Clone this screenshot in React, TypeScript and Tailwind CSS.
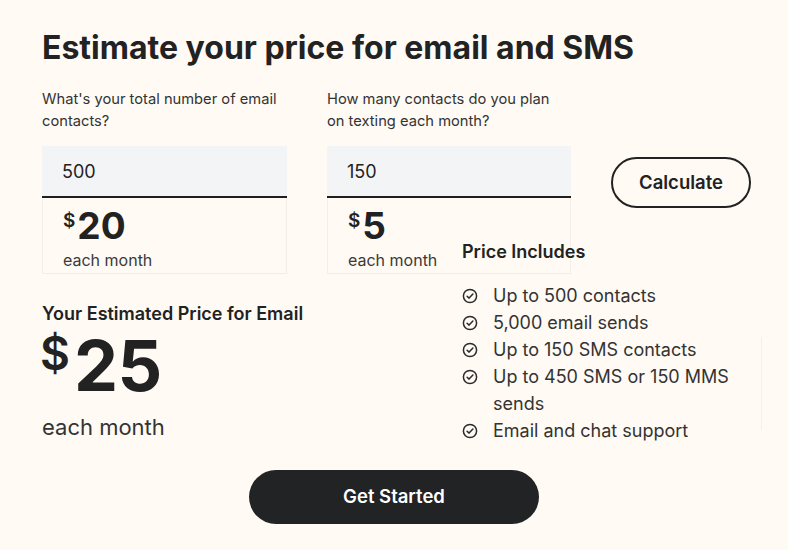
import React from "react";

const CheckIcon = () => (
  <svg width="16" height="16" viewBox="0 0 16 16" fill="none" className="shrink-0">
    <circle cx="8" cy="8" r="6.6" stroke="#2b2b2b" strokeWidth="1.5" />
    <path d="M5.1 8.2 L7.1 10.1 L10.9 6.1" stroke="#2b2b2b" strokeWidth="1.5" strokeLinecap="round" strokeLinejoin="round" />
  </svg>
);

const items = [
  "Up to 500 contacts",
  "5,000 email sends",
  "Up to 150 SMS contacts",
  "Up to 450 SMS or 150 MMS sends",
  "Email and chat support",
];

function InputCol({ label, value, price }: { label: string; value: string; price: string }) {
  return (
    <div className="flex flex-col">
      <div className="text-[14.7px] leading-[22px] text-[#333] h-[58px]">{label}</div>
      <div className="h-[52px] bg-[#f3f4f6] border-b-2 border-[#1f1f1f] flex items-center px-[20px] text-[18px] text-[#222]">
        {value}
      </div>
      <div className="h-[76px] border border-t-0 border-[#f3eee6] pl-[20px] pt-[8px]">
        <div className="flex items-start text-[#222]">
          <span className="text-[19px] font-semibold leading-none mt-[5px] mr-[2px]">$</span>
          <span className="text-[37px] font-bold leading-[40px]">{price}</span>
        </div>
        <div className="text-[16px] text-[#3a3a3a] leading-[20px] mt-[4px]">each month</div>
      </div>
    </div>
  );
}

export default function App() {
  return (
    <div
      className="w-[788px] h-[550px] bg-[#fffaf3] text-[#222] pl-[42px] pr-[37px] pt-[28px] overflow-hidden"
      style={{ fontFamily: "Inter, 'Noto Sans', sans-serif" }}
    >
      <h1 className="text-[32px] font-bold leading-[40px] text-[#222]">
        Estimate your price for email and SMS
      </h1>
      <div className="grid grid-cols-[245px_244px_140px] gap-x-[40px] mt-[20px]">
        <InputCol label="What's your total number of email contacts?" value="500" price="20" />
        <InputCol label="How many contacts do you plan on texting each month?" value="150" price="5" />
        <div className="pt-[69px]">
          <button className="w-[140px] h-[51px] rounded-full border-2 border-[#222] text-[18.5px] font-semibold text-[#222]">
            Calculate
          </button>
        </div>
      </div>
      <div className="grid grid-cols-[420px_300px] items-end -mt-[34px]">
        <div className="pb-[2px]">
          <div className="text-[18px] font-semibold leading-[24px] text-[#222] -mt-[1px]">Your Estimated Price for Email</div>
          <div className="flex items-start mt-[4px] h-[82px]">
            <span className="text-[46px] font-semibold leading-none mt-[0px] mr-[4px] -ml-[2px]">$</span>
            <span className="text-[70px] font-bold leading-[72px] tracking-[-0.5px]">25</span>
          </div>
          <div className="text-[22px] text-[#333] leading-[30px]">each month</div>
        </div>
        <div className="relative">
          <div className="absolute right-0 top-[97px] h-[93px] w-px bg-[#f4efe7]" />
          <div className="text-[18px] font-semibold leading-[24px] text-[#222] mb-[18px]">Price Includes</div>
          <ul className="flex flex-col w-[285px]">
            {items.map((t) => (
              <li key={t} className="flex items-start gap-[15px] text-[18px] leading-[27px] text-[#333]">
                <span className="mt-[6px]"><CheckIcon /></span>
                <span>{t}</span>
              </li>
            ))}
          </ul>
        </div>
      </div>
      <div className="flex justify-center mt-[26px] pr-[5px]">
        <button className="w-[290px] h-[54px] rounded-full bg-[#222325] text-white text-[18.5px] font-semibold">
          Get Started
        </button>
      </div>
    </div>
  );
}
